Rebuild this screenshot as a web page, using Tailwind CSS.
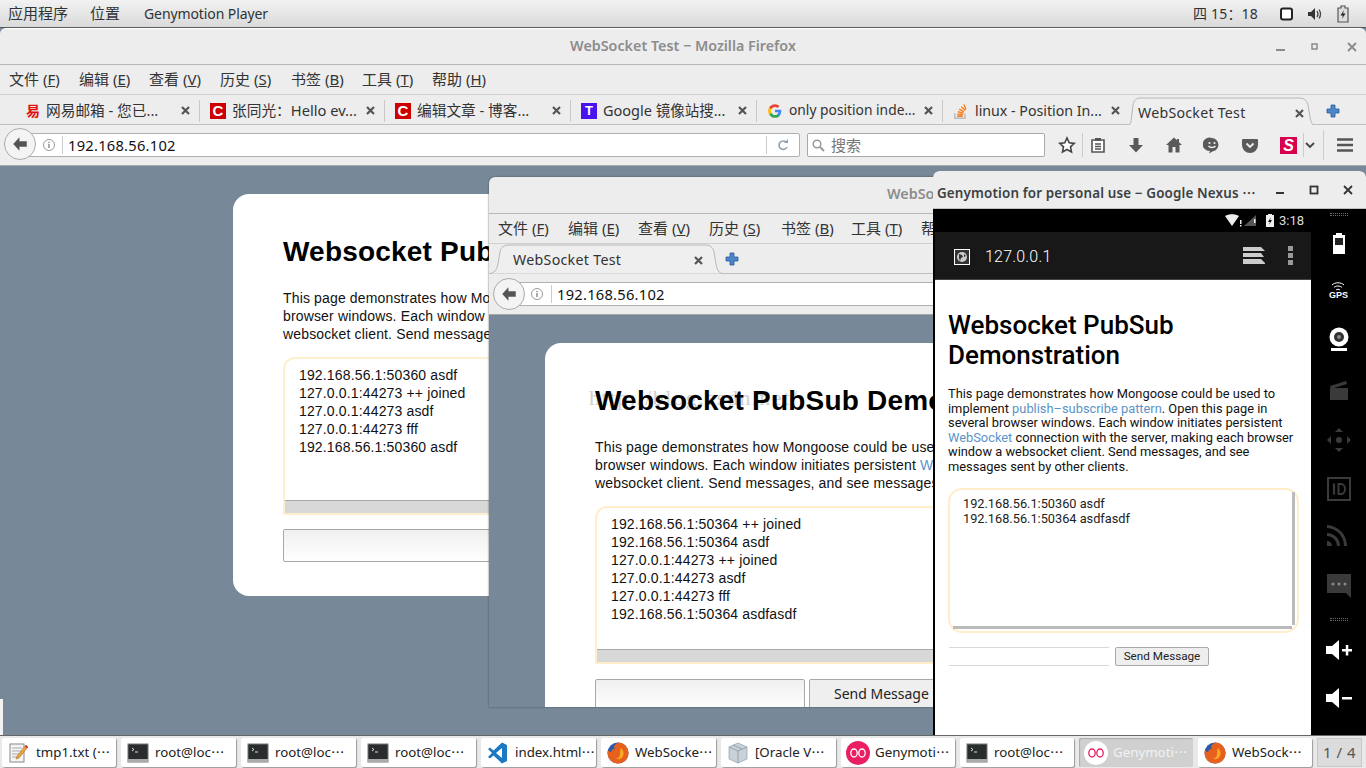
<!DOCTYPE html>
<html lang="zh"><head><meta charset="utf-8"><script src="https://cdn.jsdelivr.net/npm/@tailwindcss/browser@4"></script></head>
<body class="overflow-hidden">
<div class="relative w-[1366px] h-[768px] overflow-hidden flex flex-col bg-[#778899] font-['Noto_Sans','Noto_Sans_CJK_SC',sans-serif] text-[#2e3436]">
<!-- top bar -->
<div class="h-[28px] shrink-0 flex items-center bg-gradient-to-b from-[#f2f2f2] to-[#dadada] border-b border-[#5a5a5a] text-[15px] pl-[8px]">
<span class="w-[82px]">应用程序</span><span class="w-[54px]">位置</span><span class="text-[14px] tracking-[-0.1px]">Genymotion Player</span>
<div class="ml-auto flex items-center">
<span class="mr-[22px] text-[14px] tracking-[0.2px]">四 15：18</span>
<svg width="13" height="14" viewBox="0 0 13 14" class="mr-[14px]"><rect x="1" y="1.500" width="11" height="11" rx="2" fill="#fff" stroke="#222" stroke-width="2"/></svg>
<svg width="16" height="14" viewBox="0 0 16 14" class="mr-[14px]"><path d="M1 5h3l4-4v12l-4-4H1z" fill="#333"/><path d="M10 4c1.300 2 1.300 4 0 6M12 2.500c2 3 2 6 0 9" stroke="#444" stroke-width="1.300" fill="none"/></svg>
<svg width="12" height="18" viewBox="0 0 12 18" class="mr-[17px]"><path d="M4 1h4v2h3v14H1V3h3z" fill="#ddd" stroke="#555" stroke-width="1.200"/><path d="M7 5L3.500 10.500H6L5 14l3.500-5.500H6z" fill="#222"/></svg>
</div></div>
<!-- main firefox -->
<div class="h-[707px] shrink-0 flex flex-col rounded-t-[6px] bg-[#ededed] border-t border-white">
<div class="h-[36px] shrink-0 flex items-center justify-center relative border-b border-[#b8b8b8] text-[14.300px] font-semibold text-[#8c8c8c] pb-[2px]">WebSocket Test − Mozilla Firefox
<div class="absolute left-[1276px] top-0 h-full flex items-center">
<svg width="10" height="10" viewBox="0 0 10 10"><rect x="0" y="7" width="9" height="2" fill="#8a8a8a"/></svg>
<svg width="10" height="10" viewBox="0 0 10 10" class="ml-[24px]"><rect x="2" y="2" width="5" height="5" fill="none" stroke="#8a8a8a" stroke-width="1.500"/></svg>
<svg width="10" height="10" viewBox="0 0 10 10" class="ml-[27px]"><path d="M1 1l8 8M9 1l-8 8" stroke="#8a8a8a" stroke-width="1.800"/></svg>
</div></div>
<div class="h-[30px] shrink-0 flex items-center text-[15px] pl-[9px] border-b border-[#d0d0d0] text-[#333]">
<span class="w-[70px]">文件 (<u>F</u>)</span><span class="w-[70px]">编辑 (<u>E</u>)</span><span class="w-[71px]">查看 (<u>V</u>)</span><span class="w-[71px]">历史 (<u>S</u>)</span><span class="w-[71px]">书签 (<u>B</u>)</span><span class="w-[70px]">工具 (<u>T</u>)</span><span>帮助 (<u>H</u>)</span></div>
<!-- tabs -->
<div class="h-[30px] shrink-0 flex items-center text-[14.700px] border-b border-[#c0c0c0] pl-[18px] text-[#333] whitespace-nowrap pt-[2px]">
<div class="w-[182px] h-[22px] flex items-center border-r border-[#c8c8c8] pr-[9px] pl-[8px]"><span class="w-[12px] text-[#e01010] text-[14px] font-bold leading-[16px] mr-[8px]">易</span><span>网易邮箱 - 您已...</span><svg width="9" height="9" viewBox="0 0 9 9" class="ml-auto"><path d="M1 1l7 7M8 1L1 8" stroke="#555" stroke-width="2.200"/></svg></div>
<div class="w-[185px] h-[22px] flex items-center border-r border-[#c8c8c8] pr-[9px] pl-[10px]"><span class="w-[16px] h-[16px] bg-[#cc0000] text-white text-[15px] font-bold leading-[16px] text-center mr-[6px] shrink-0 font-['Liberation_Sans']">C</span><span>张同光：Hello ev...</span><svg width="9" height="9" viewBox="0 0 9 9" class="ml-auto"><path d="M1 1l7 7M8 1L1 8" stroke="#555" stroke-width="2.200"/></svg></div>
<div class="w-[186px] h-[22px] flex items-center border-r border-[#c8c8c8] pr-[9px] pl-[10px]"><span class="w-[16px] h-[16px] bg-[#cc0000] text-white text-[15px] font-bold leading-[16px] text-center mr-[6px] shrink-0 font-['Liberation_Sans']">C</span><span>编辑文章 - 博客...</span><svg width="9" height="9" viewBox="0 0 9 9" class="ml-auto"><path d="M1 1l7 7M8 1L1 8" stroke="#555" stroke-width="2.200"/></svg></div>
<div class="w-[186px] h-[22px] flex items-center border-r border-[#c8c8c8] pr-[9px] pl-[10px] text-[14.500px]"><span class="w-[16px] h-[16px] bg-[#4a12ec] text-white text-[13px] font-bold leading-[16px] text-center mr-[6px] shrink-0 font-['Liberation_Sans']">T</span><span>Google 镜像站搜...</span><svg width="9" height="9" viewBox="0 0 9 9" class="ml-auto"><path d="M1 1l7 7M8 1L1 8" stroke="#555" stroke-width="2.200"/></svg></div>
<div class="w-[186px] h-[22px] flex items-center border-r border-[#c8c8c8] pr-[9px] pl-[10px] text-[13.800px]">
<svg width="16" height="16" viewBox="0 0 14 14" class="mr-[6px] shrink-0"><path d="M12.500 7c0-.4 0-.8-.1-1.200H7v2.300h3.100c-.2.800-.6 1.400-1.200 1.800v1.400h1.900c1.100-1 1.700-2.500 1.700-4.300z" fill="#4285f4"/><path d="M7 13c1.600 0 2.900-.5 3.800-1.500l-1.900-1.400c-.5.300-1.100.5-1.900.5-1.500 0-2.700-1-3.200-2.300h-2v1.500C2.800 11.700 4.800 13 7 13z" fill="#34a853"/><path d="M3.800 8.700c-.2-.5-.3-1.100-.3-1.700s.1-1.200.3-1.700V3.800h-2C1.300 4.700 1 5.800 1 7s.3 2.300.8 3.200z" fill="#fbbc05"/><path d="M7 3.400c.9 0 1.600.3 2.200.9l1.700-1.700C9.900 1.600 8.600 1 7 1 4.800 1 2.800 2.300 1.800 3.800l2 1.500C4.300 4.400 5.500 3.400 7 3.400z" fill="#ea4335"/></svg>
<span>only position inde...</span><svg width="9" height="9" viewBox="0 0 9 9" class="ml-auto"><path d="M1 1l7 7M8 1L1 8" stroke="#555" stroke-width="2.200"/></svg></div>
<div class="w-[180px] h-[22px] flex items-center pr-[3px] pl-[10px] text-[14.200px]">
<svg width="16" height="18" viewBox="0 0 14 16" class="mr-[6px] shrink-0"><path d="M1.500 10v4.500h9V10" stroke="#bcbbbb" stroke-width="1.300" fill="none"/><path d="M3.500 12.700h5M3.700 10.800l4.900.5M4.300 8.700l4.800 1.300M5.400 6.400l4.200 2.400M7.300 4.200l3.400 3.400M9.600 2.300l1.800 4.400" stroke="#f48024" stroke-width="1.300"/></svg>
<span>linux - Position In...</span><svg width="9" height="9" viewBox="0 0 9 9" class="ml-auto"><path d="M1 1l7 7M8 1L1 8" stroke="#555" stroke-width="2.200"/></svg></div>
<div class="relative w-[191px] h-[30px] ml-[3px] flex items-center pl-[12px] pr-[13px] pt-[2px] self-start text-[14.200px] tracking-[0.25px]">
<svg class="absolute left-0 top-0 w-full h-[30px]" viewBox="0 0 191 30" preserveAspectRatio="none"><path d="M0 29.500C4 29.500 5 26 5.500 20L7 8C8 3 10 1 15 1H172C178 1 181 3 182 8L184 20C185 26 187 29.500 191 29.500" fill="#efefef" stroke="#b4b8bc"/></svg>
<span class="relative flex-1">WebSocket Test</span><svg width="9" height="9" viewBox="0 0 9 9" class="relative"><path d="M1 1l7 7M8 1L1 8" stroke="#555" stroke-width="2.200"/></svg></div>
<svg width="14" height="14" viewBox="0 0 14 14" class="ml-[9px]"><path d="M5 1h4v4h4v4H9v4H5V9H1V5h4z" fill="#4a86c8" stroke="#2a5a9a" stroke-width=".8"/></svg>
</div>
<!-- nav -->
<div class="h-[41px] shrink-0 flex items-center relative border-b border-[#a8a8a8] pl-[17px] text-[14.700px] bg-[#eeeeee]">
<div class="absolute left-[4px] top-[3px] w-[32px] h-[32px] rounded-full border border-[#aaa] bg-[#f4f4f4] flex items-center justify-center z-10"><svg width="18" height="16" viewBox="0 0 16 14"><path d="M7.500 1L2 7l5.500 6V9.500H14v-5H7.500z" fill="#555"/></svg></div>
<div class="w-[783px] h-[24px] bg-white border border-[#b0b0b0] rounded-r-[2px] flex items-center text-[#111] relative">
<svg width="14" height="14" viewBox="0 0 14 14" class="absolute left-[24px]"><circle cx="7" cy="7" r="5.500" fill="none" stroke="#999"/><rect x="6.300" y="6" width="1.400" height="4" fill="#888"/><rect x="6.300" y="3.800" width="1.400" height="1.400" fill="#888"/></svg>
<span class="ml-[44px] border-l border-[#ccc] pl-[5px] h-[18px] leading-[18px] tracking-[0.25px]">192.168.56.102</span>
<div class="ml-auto w-[33px] h-[18px] border-l border-[#ccc] flex items-center justify-center"><svg width="12" height="12" viewBox="0 0 12 12"><path d="M9.500 3.500A4.200 4.200 0 1 0 10 8" fill="none" stroke="#8fa0b0" stroke-width="1.600"/><path d="M7 4h4V0z" fill="#8fa0b0"/></svg></div>
</div>
<div class="ml-[7px] w-[238px] h-[24px] bg-white border border-[#a8a8a8] rounded-[2px] flex items-center pl-[3px] text-[15px] text-[#777]">
<svg width="15" height="15" viewBox="0 0 15 15" class="mr-[5px]"><circle cx="6" cy="6" r="3.800" fill="none" stroke="#999" stroke-width="1.500"/><path d="M9 9l4 4" stroke="#999" stroke-width="2"/></svg>搜索</div>
<div class="flex items-center ml-[13px] h-[30px]">
<svg width="18" height="18" viewBox="0 0 18 18"><path d="M9 2l2.200 4.800 5 .6-3.700 3.500 1 5.100L9 13.500 4.500 16l1-5.100L1.800 7.400l5-.6z" fill="#fff" stroke="#444" stroke-width="1.600"/></svg>
<span class="w-px h-[24px] bg-[#ccc] ml-[6px]"></span>
<svg width="16" height="18" viewBox="0 0 16 18" class="ml-[7px]"><path d="M2 4h12v12H2z" fill="#fff" stroke="#555" stroke-width="1.600"/><path d="M5 2h6v3H5z" fill="#555"/><path d="M5 8h6M5 10.500h6M5 13h6" stroke="#555" stroke-width="1.300"/></svg>
<svg width="16" height="18" viewBox="0 0 16 18" class="ml-[22px]"><path d="M5.500 2h5v7H15l-7 7.500L1 9h4.500z" fill="#5a5a5a"/></svg>
<svg width="18" height="18" viewBox="0 0 18 18" class="ml-[21px]"><path d="M9 1.500L1 9h2.500v7.500h4V11h3v5.500h4V9H17l-3-2.800V3h-2v1.300z" fill="#5a5a5a"/></svg>
<svg width="18" height="18" viewBox="0 0 18 18" class="ml-[20px]"><path d="M9 2a7 6.700 0 1 0-2 13l-1 2.500 4-2.300A7 6.700 0 0 0 9 2z" fill="#5a5a5a"/><circle cx="6.500" cy="7" r="1.100" fill="#eee"/><circle cx="11.500" cy="7" r="1.100" fill="#eee"/><path d="M5.500 10c1.500 2 5.500 2 7 0" stroke="#eee" stroke-width="1.300" fill="none"/></svg>
<svg width="18" height="18" viewBox="0 0 18 18" class="ml-[20px]"><path d="M2 3h14a1 1 0 0 1 1 1v5a8 8 0 0 1-16 0V4a1 1 0 0 1 1-1z" fill="#5a5a5a"/><path d="M5.500 7.500L9 11l3.500-3.500" stroke="#eee" stroke-width="1.800" fill="none"/></svg>
<span class="ml-[21px] w-[17px] h-[17px] bg-[#d6004f] text-white text-center font-bold italic text-[16px] leading-[17px] font-['Liberation_Sans']">S</span>
<span class="w-px h-[24px] bg-[#ccc] ml-[6px]"></span>
<svg width="10" height="8" viewBox="0 0 10 8" class="ml-[1px]"><path d="M1 2l4 4 4-4" stroke="#444" stroke-width="1.800" fill="none"/></svg>
<span class="w-px h-[30px] bg-[#ccc] ml-[8px]"></span>
<svg width="18" height="16" viewBox="0 0 18 16" class="ml-[12px]"><path d="M1 2.500h16M1 8h16M1 13.500h16" stroke="#555" stroke-width="2.600"/></svg>
</div></div>
<!-- content -->
<div class="flex-1 relative bg-[#778899]">
<div class="absolute left-0 bottom-0 w-[3px] h-[36px] bg-[#f2f2f2]"></div>
<!-- back card -->
<div class="absolute left-[233px] top-[28px] w-[620px] h-[402px] bg-white rounded-[16px] px-[50px] pt-[41px] font-['Liberation_Sans',sans-serif] text-black">
<h1 class="text-[28px] font-bold leading-[34px] tracking-[0.2px] whitespace-nowrap">Websocket PubSub Demonstration</h1>
<p class="mt-[20px] text-[14px] leading-[18px] text-[#111] whitespace-nowrap tracking-[0.15px]">This page demonstrates how Mongoose could be used to<br>browser windows. Each window initiates persistent WebSocket<br>websocket client. Send messages, and see messages</p>
<div class="mt-[14px] h-[158px] w-[520px] border-2 border-[#ffeecb] rounded-tl-[12px] flex flex-col text-[14px] leading-[18px] text-[#111] tracking-[0.15px]">
<div class="flex-1 pl-[14px] pt-[7px]">192.168.56.1:50360 asdf<br>127.0.0.1:44273 ++ joined<br>127.0.0.1:44273 asdf<br>127.0.0.1:44273 fff<br>192.168.56.1:50360 asdf</div>
<div class="h-[13px] bg-[#d8d8d8] border-t border-[#a8a8a8]"></div></div>
<div class="mt-[14px] h-[33px] w-[520px] border border-[#a8a8a8] rounded-[2px] bg-gradient-to-b from-[#f0f0f0] to-white"></div>
</div></div></div>
<!-- taskbar -->
<div class="flex-1 flex items-start gap-[5px] pl-[2px] pt-[2px] bg-[#e9e9e9] border-t border-[#666] text-[13.300px] text-[#222] whitespace-nowrap">
<div class="w-[114px] h-[29px] bg-white rounded-[2px] shadow-[1px_1px_1px_#999] flex items-center"><span class="w-[34px] flex justify-center shrink-0"><svg width="20" height="22" viewBox="0 0 20 22"><rect x="1" y="2" width="14" height="18" fill="#f4f4f4" stroke="#888"/><path d="M3 6h10M3 9h10M3 12h8M3 15h6" stroke="#aaa"/><path d="M17 3l2 2-9 11-3 1 1-3z" fill="#e8a33c" stroke="#a5681c" stroke-width=".5"/><path d="M17 3l2 2-1 1.500-2-2z" fill="#d33"/></svg></span><span>tmp1.txt (⋯</span></div>
<div class="w-[115px] h-[29px] bg-white rounded-[2px] shadow-[1px_1px_1px_#999] flex items-center"><span class="w-[34px] flex justify-center shrink-0"><svg width="22" height="22" viewBox="0 0 22 22"><rect x="1" y="2" width="20" height="18" fill="#2a2d2d" stroke="#777"/><rect x="1" y="17" width="20" height="3" fill="#aaa"/><path d="M5 6l2 1.500L5 9M8 10h3" stroke="#ddd" fill="none"/></svg></span><span>root@loc⋯</span></div>
<div class="w-[115px] h-[29px] bg-white rounded-[2px] shadow-[1px_1px_1px_#999] flex items-center"><span class="w-[34px] flex justify-center shrink-0"><svg width="22" height="22" viewBox="0 0 22 22"><rect x="1" y="2" width="20" height="18" fill="#2a2d2d" stroke="#777"/><rect x="1" y="17" width="20" height="3" fill="#aaa"/><path d="M5 6l2 1.500L5 9M8 10h3" stroke="#ddd" fill="none"/></svg></span><span>root@loc⋯</span></div>
<div class="w-[115px] h-[29px] bg-white rounded-[2px] shadow-[1px_1px_1px_#999] flex items-center"><span class="w-[34px] flex justify-center shrink-0"><svg width="22" height="22" viewBox="0 0 22 22"><rect x="1" y="2" width="20" height="18" fill="#2a2d2d" stroke="#777"/><rect x="1" y="17" width="20" height="3" fill="#aaa"/><path d="M5 6l2 1.500L5 9M8 10h3" stroke="#ddd" fill="none"/></svg></span><span>root@loc⋯</span></div>
<div class="w-[115px] h-[29px] bg-white rounded-[2px] shadow-[1px_1px_1px_#999] flex items-center"><span class="w-[34px] flex justify-center shrink-0"><svg width="20" height="24" viewBox="0 0 20 23"><path d="M14 1l5 2.500v16L14 22 5.500 14 2 17 0 15.500l4-4-4-4L2 6l3.500 3z" fill="#1c78c0"/><path d="M14 6.500L8 11.500l6 5z" fill="#fff"/></svg></span><span>index.html⋯</span></div>
<div class="w-[115px] h-[29px] bg-white rounded-[2px] shadow-[1px_1px_1px_#999] flex items-center"><span class="w-[34px] flex justify-center shrink-0"><svg width="22" height="22" viewBox="0 0 22 22"><circle cx="11" cy="11" r="10.500" fill="#2c5aa8"/><path d="M11 .5a10.500 10.500 0 1 1-10 7.500c1 1.500 2 2 3 2 .5-2 2-3 4-3.500-1-1-1-2-.5-3z" fill="#e8611c"/><path d="M14 6a7 7 0 0 1 2 8c-1 3-5 4-7.500 2.500C11 17 13 15 13 12c0-2 0-4 1-6z" fill="#f9a825"/></svg></span><span>WebSocke⋯</span></div>
<div class="w-[115px] h-[29px] bg-white rounded-[2px] shadow-[1px_1px_1px_#999] flex items-center"><span class="w-[34px] flex justify-center shrink-0"><svg width="20" height="24" viewBox="0 0 20 22"><path d="M10 1l9 4v12l-9 4-9-4V5z" fill="#c8d0d8" stroke="#9aa8b5" stroke-width=".8"/><path d="M1 5l9 4 9-4M10 9v12M5 3l9 4" stroke="#8a98a5" fill="none" stroke-width=".8"/></svg></span><span>[Oracle V⋯</span></div>
<div class="w-[114px] h-[29px] bg-white rounded-[2px] shadow-[1px_1px_1px_#999] flex items-center"><span class="w-[34px] flex justify-center shrink-0"><svg width="24" height="24" viewBox="0 0 24 24"><circle cx="12" cy="12" r="12" fill="#e91e63"/><ellipse cx="8" cy="12" rx="3.200" ry="4" fill="none" stroke="#fff" stroke-width="1.300"/><ellipse cx="16" cy="12" rx="3.200" ry="4" fill="none" stroke="#fff" stroke-width="1.300"/></svg></span><span>Genymoti⋯</span></div>
<div class="w-[114px] h-[29px] bg-white rounded-[2px] shadow-[1px_1px_1px_#999] flex items-center"><span class="w-[34px] flex justify-center shrink-0"><svg width="22" height="22" viewBox="0 0 22 22"><rect x="1" y="2" width="20" height="18" fill="#2a2d2d" stroke="#777"/><rect x="1" y="17" width="20" height="3" fill="#aaa"/><path d="M5 6l2 1.500L5 9M8 10h3" stroke="#ddd" fill="none"/></svg></span><span>root@loc⋯</span></div>
<div class="w-[114px] h-[29px] bg-[#d0d0d0] rounded-[2px] shadow-[inset_1px_1px_1px_#aaa] flex items-center text-[#f2f2f2]"><span class="w-[34px] flex justify-center shrink-0"><svg width="24" height="24" viewBox="0 0 24 24"><circle cx="12" cy="12" r="12" fill="#fff"/><ellipse cx="8" cy="12" rx="3.200" ry="4" fill="none" stroke="#e91e63" stroke-width="1.300"/><ellipse cx="16" cy="12" rx="3.200" ry="4" fill="none" stroke="#e91e63" stroke-width="1.300"/></svg></span><span>Genymoti⋯</span></div>
<div class="w-[114px] h-[29px] bg-white rounded-[2px] shadow-[1px_1px_1px_#999] flex items-center"><span class="w-[34px] flex justify-center shrink-0"><svg width="22" height="22" viewBox="0 0 22 22"><circle cx="11" cy="11" r="10.500" fill="#2c5aa8"/><path d="M11 .5a10.500 10.500 0 1 1-10 7.500c1 1.500 2 2 3 2 .5-2 2-3 4-3.500-1-1-1-2-.5-3z" fill="#e8611c"/><path d="M14 6a7 7 0 0 1 2 8c-1 3-5 4-7.500 2.500C11 17 13 15 13 12c0-2 0-4 1-6z" fill="#f9a825"/></svg></span><span>WebSock⋯</span></div>
<div class="w-[45px] h-[29px] bg-[#dcdcdc] border border-[#c8c8c8] flex items-center justify-center text-[15px] text-[#555] tracking-[0.5px]">1 / 4</div>
</div>
<!-- second firefox -->
<div class="absolute left-[489px] top-[177px] w-[470px] h-[530px] rounded-t-[6px] bg-[#ededed] flex flex-col overflow-hidden shadow-[0_0_2px_#444]">
<div class="h-[37px] shrink-0 border-b border-[#b8b8b8] flex items-center pl-[398px] pb-[2px] text-[14.300px] font-semibold text-[#8c8c8c] whitespace-nowrap">WebSocket Test</div>
<div class="h-[30px] shrink-0 flex items-center text-[15px] pl-[9px] border-b border-[#d0d0d0] text-[#333] whitespace-nowrap">
<span class="w-[70px] shrink-0">文件 (<u>F</u>)</span><span class="w-[70px] shrink-0">编辑 (<u>E</u>)</span><span class="w-[71px] shrink-0">查看 (<u>V</u>)</span><span class="w-[72px] shrink-0">历史 (<u>S</u>)</span><span class="w-[70px] shrink-0">书签 (<u>B</u>)</span><span class="w-[70px] shrink-0">工具 (<u>T</u>)</span><span>帮助 (<u>H</u>)</span></div>
<div class="h-[30px] shrink-0 flex items-center text-[14.200px] border-b border-[#c0c0c0] text-[#333] tracking-[0.3px]">
<div class="relative w-[234px] h-[30px] self-start flex items-center pl-[24px] pr-[20px] pt-[2px]">
<svg class="absolute left-0 top-0 w-full h-[30px]" viewBox="0 0 234 30" preserveAspectRatio="none"><path d="M0 29.500C5 29.500 8 26 9 20L11 8C12 3 15 1 20 1H215C221 1 224 3 225 8L227 20C228 26 230 29.500 234 29.500" fill="#efefef" stroke="#b4b8bc"/></svg>
<span class="relative flex-1">WebSocket Test</span><svg width="9" height="9" viewBox="0 0 9 9" class="relative"><path d="M1 1l7 7M8 1L1 8" stroke="#555" stroke-width="2.200"/></svg></div>
<svg width="14" height="14" viewBox="0 0 14 14" class="ml-[2px]"><path d="M5 1h4v4h4v4H9v4H5V9H1V5h4z" fill="#4a86c8" stroke="#2a5a9a" stroke-width=".8"/></svg></div>
<div class="h-[41px] shrink-0 flex items-center relative border-b border-[#a8a8a8] text-[14.700px]">
<div class="absolute left-[4px] top-[4px] w-[32px] h-[32px] rounded-full border border-[#aaa] bg-[#f4f4f4] flex items-center justify-center z-10"><svg width="18" height="16" viewBox="0 0 16 14"><path d="M7.500 1L2 7l5.500 6V9.500H14v-5H7.500z" fill="#555"/></svg></div>
<div class="ml-[18px] flex-1 h-[24px] bg-white border-y border-[#b0b0b0] flex items-center pl-[23px] text-[#111]">
<svg width="14" height="14" viewBox="0 0 14 14" class="mr-[7px]"><circle cx="7" cy="7" r="5.500" fill="none" stroke="#999"/><rect x="6.300" y="6" width="1.400" height="4" fill="#888"/><rect x="6.300" y="3.800" width="1.400" height="1.400" fill="#888"/></svg>
<span class="border-l border-[#ccc] pl-[5px] h-[18px] leading-[18px] tracking-[0.25px]">192.168.56.102</span></div></div>
<div class="flex-1 relative bg-[#778899]">
<div class="absolute left-[56px] top-[28px] w-[620px] h-[420px] bg-white rounded-[16px] px-[50px] pt-[41px] font-['Liberation_Sans',sans-serif] text-black">
<span class="absolute left-[44px] top-[38px] text-[22px] text-[#d0d0d0] whitespace-nowrap tracking-[1.600px] font-['Liberation_Serif',serif]">http://blog.csdn.net/</span>
<h1 class="relative text-[28px] font-bold leading-[34px] tracking-[0.2px] whitespace-nowrap">Websocket PubSub Demonstration</h1>
<p class="mt-[20px] text-[14px] leading-[18px] text-[#111] whitespace-nowrap tracking-[0.15px]">This page demonstrates how Mongoose could be used to<br>browser windows. Each window initiates persistent <span class="text-[#5b93c8]">WebSocket</span><br>websocket client. Send messages, and see messages</p>
<div class="mt-[14px] h-[158px] w-[520px] border-2 border-[#ffeecb] rounded-tl-[12px] flex flex-col text-[14px] leading-[18px] text-[#111] tracking-[0.15px]">
<div class="flex-1 pl-[14px] pt-[7px]">192.168.56.1:50364 ++ joined<br>192.168.56.1:50364 asdf<br>127.0.0.1:44273 ++ joined<br>127.0.0.1:44273 asdf<br>127.0.0.1:44273 fff<br>192.168.56.1:50364 asdfasdf</div>
<div class="h-[13px] bg-[#d8d8d8] border-t border-[#a8a8a8]"></div></div>
<div class="mt-[15px] flex gap-[4px]"><div class="w-[210px] h-[33px] border border-[#a8a8a8] rounded-[2px] bg-gradient-to-b from-[#f0f0f0] to-white"></div><div class="w-[150px] h-[33px] border border-[#a8a8a8] rounded-[2px] bg-[#efefef] flex items-center pl-[24px] pb-[4px] text-[14px] text-[#222] font-['Noto_Sans']">Send Message</div></div>
</div></div></div>
<!-- genymotion -->
<div class="absolute left-[933px] top-[171px] w-[433px] h-[564px] flex flex-col rounded-t-[6px] overflow-hidden bg-black">
<div class="h-[38px] shrink-0 bg-[#ededed] border-b border-[#c0c0c0] flex items-center pl-[4px] pt-[8px] text-[13.400px] font-semibold text-[#3c4043] whitespace-nowrap tracking-[0.15px]">Genymotion for personal use − Google Nexus ⋯
<svg width="10" height="10" viewBox="0 0 10 10" class="ml-[19px] -mt-[6px]"><rect x="1" y="6" width="8" height="2" fill="#333"/></svg>
<svg width="10" height="10" viewBox="0 0 10 10" class="ml-[24px] -mt-[8px]"><rect x="1.500" y="1.500" width="7" height="7" fill="none" stroke="#333" stroke-width="1.800"/></svg>
<svg width="10" height="10" viewBox="0 0 10 10" class="ml-[24px] -mt-[8px]"><path d="M1 1l8 8M9 1l-8 8" stroke="#333" stroke-width="1.800"/></svg></div>
<div class="flex-1 flex min-h-0 pl-[2px]">
<div class="w-[376px] flex flex-col">
<div class="h-[23px] shrink-0 flex items-center justify-end pr-[7px] text-[13px] text-[#ddd] font-['Roboto',sans-serif]">
<svg width="32" height="13" viewBox="0 0 32 13" class="mr-[9px]"><path d="M0 2c4-2.500 10-2.500 14 0L7 12z" fill="#eee"/><rect x="15" y="6" width="1.500" height="4" fill="#eee"/><rect x="15" y="11" width="1.500" height="1.500" fill="#eee"/><path d="M19 12L31 1v11z" fill="#555"/><rect x="29" y="5" width="1.500" height="4" fill="#eee"/></svg>
<svg width="8" height="13" viewBox="0 0 8 13" class="mr-[5px]"><rect y="1" width="8" height="12" fill="#eee"/><rect x="2" width="4" height="2" fill="#eee"/><path d="M5 3L2 8h2l-1 3 3-5H4z" fill="#111"/></svg>3:18</div>
<div class="h-[48px] shrink-0 bg-[#181818] border-b border-[#444] flex items-center pl-[19px] pt-[3px] text-white font-['Roboto',sans-serif] text-[16px] font-light tracking-[0.2px]">
<svg width="16" height="16" viewBox="0 0 16 16" class="mr-[15px] shrink-0"><rect x=".5" y=".5" width="15" height="15" fill="#333" stroke="#fff"/><circle cx="8" cy="8" r="5" fill="#ccc"/><path d="M5 5l3 1 1 2-2 1-1 3-1-3zM10 5l2 2-2 1z" fill="#333"/></svg>127.0.0.1
<svg width="22" height="17" viewBox="0 0 22 17" class="ml-auto mr-[23px] -mt-[3px]"><path d="M0 0h18l4 4H0zM0 6h18l3 4H0zM0 12h18l4 4v1H0z" fill="#ccc"/></svg>
<div class="flex flex-col gap-[2px] mr-[18px] -mt-[3px]"><span class="w-[5px] h-[5px] bg-[#999]"></span><span class="w-[5px] h-[5px] bg-[#999]"></span><span class="w-[5px] h-[5px] bg-[#999]"></span></div></div>
<div class="flex-1 bg-white pl-[13px] pt-[30px] font-['Roboto',sans-serif] text-black">
<h1 class="text-[26px] font-medium leading-[30px] w-[300px]">Websocket PubSub Demonstration</h1>
<p class="mt-[17px] text-[12.850px] leading-[14.500px] w-[362px] text-[#111] whitespace-nowrap">This page demonstrates how Mongoose could be used to<br>implement <span class="text-[#5b93c8]">publish–subscribe pattern</span>. Open this page in<br>several browser windows. Each window initiates persistent<br><span class="text-[#5b93c8]">WebSocket</span> connection with the server, making each browser<br>window a websocket client. Send messages, and see<br>messages sent by other clients.</p>
<div class="mt-[14px] w-[351px] h-[145px] border-2 border-[#ffeecb] rounded-[14px] relative pl-[13px] pt-[6px] text-[12.750px] leading-[15px] text-[#222]">192.168.56.1:50360 asdf<br>192.168.56.1:50364 asdfasdf
<span class="absolute right-[2px] top-[2px] bottom-[6px] w-[3px] bg-[#bbb]"></span><span class="absolute left-[3px] right-[5px] bottom-[2px] h-[3px] bg-[#bbb]"></span></div>
<div class="mt-[14px] ml-[1px] flex items-center gap-[6px]"><div class="w-[160px] h-[19px] border-y border-[#d8d8d8]"></div><div class="w-[94px] h-[19px] border border-[#aaa] rounded-[2px] bg-[#eeeeee] text-center text-[11.700px] leading-[17px] text-[#222]">Send Message</div></div>
</div></div>
<!-- sidebar -->
<div class="flex-1 flex flex-col items-center pt-[4px] bg-black">
<div class="w-[18px] h-[3px] border-y border-dotted border-[#666]"></div>
<svg width="12" height="21" viewBox="0 0 12 21" class="mt-[17px] shrink-0"><path d="M3 0h6v2h3v19H0V2h3z" fill="#fff"/><rect x="2" y="5" width="8" height="7" fill="#222"/></svg>
<div class="mt-[28px] flex flex-col items-center text-white font-bold text-[9px] leading-[9px] font-['Liberation_Sans']"><svg width="14" height="9" viewBox="0 0 14 9"><path d="M1 3c3-3 9-3 12 0M3 5.500c2-2 6-2 8 0M5 8c1-1 3-1 4 0" stroke="#fff" fill="none"/></svg>GPS</div>
<svg width="22" height="24" viewBox="0 0 22 24" class="mt-[27px] shrink-0"><circle cx="11" cy="10" r="9.500" fill="#fff"/><circle cx="11" cy="10" r="5" fill="#333"/><circle cx="11" cy="10" r="2" fill="#888"/><path d="M3 21h16v3H3z" fill="#fff"/></svg>
<svg width="20" height="22" viewBox="0 0 20 22" class="mt-[28px] shrink-0"><path d="M1 9h18v12H1z" fill="#3a3a3a"/><path d="M1 7l16-5 1 3L2 10z" fill="#3a3a3a"/></svg>
<svg width="24" height="24" viewBox="0 0 24 24" class="mt-[27px] shrink-0"><path d="M12 0l4 4H8zM12 24l-4-4h8zM0 12l4-4v8zM24 12l-4 4V8z" fill="#3a3a3a"/><circle cx="12" cy="12" r="3" fill="#3a3a3a"/></svg>
<svg width="24" height="24" viewBox="0 0 24 24" class="mt-[25px] shrink-0"><rect x="1" y="1" width="22" height="22" fill="none" stroke="#3a3a3a" stroke-width="2"/><path d="M7 6.500v11" stroke="#3a3a3a" stroke-width="2.200"/><path d="M11.500 7v10h2.500a4 5 0 0 0 0-10z" fill="none" stroke="#3a3a3a" stroke-width="2"/></svg>
<svg width="20" height="21" viewBox="0 0 20 21" class="mt-[24px] mr-[4px] shrink-0"><path d="M0 16a5 5 0 0 1 5 5H0zM0 8a13 13 0 0 1 13 13h-3A10 10 0 0 0 0 11zM0 0a21 21 0 0 1 20 21h-3A18 18 0 0 0 0 3z" fill="#3a3a3a"/></svg>
<svg width="24" height="24" viewBox="0 0 24 24" class="mt-[28px] shrink-0"><path d="M0 0h24v24l-5-5H0z" fill="#3a3a3a"/><circle cx="6" cy="10" r="1.500" fill="#888"/><circle cx="12" cy="10" r="1.500" fill="#888"/><circle cx="18" cy="10" r="1.500" fill="#888"/></svg>
<div class="mt-[20px] w-[18px] h-[3px] border-y border-dotted border-[#666]"></div>
<svg width="26" height="20" viewBox="0 0 26 20" class="mt-[19px] shrink-0"><path d="M0 6h6l7-6v20l-7-6H0z" fill="#fff"/><path d="M16 9h10v2.500H16zM19.800 5h2.500v10.500h-2.500z" fill="#fff"/></svg>
<svg width="26" height="20" viewBox="0 0 26 20" class="mt-[28px] shrink-0"><path d="M0 6h6l7-6v20l-7-6H0z" fill="#fff"/><path d="M16 9h10v2.500H16z" fill="#fff"/></svg>
</div></div></div>
</div>
</body></html>
